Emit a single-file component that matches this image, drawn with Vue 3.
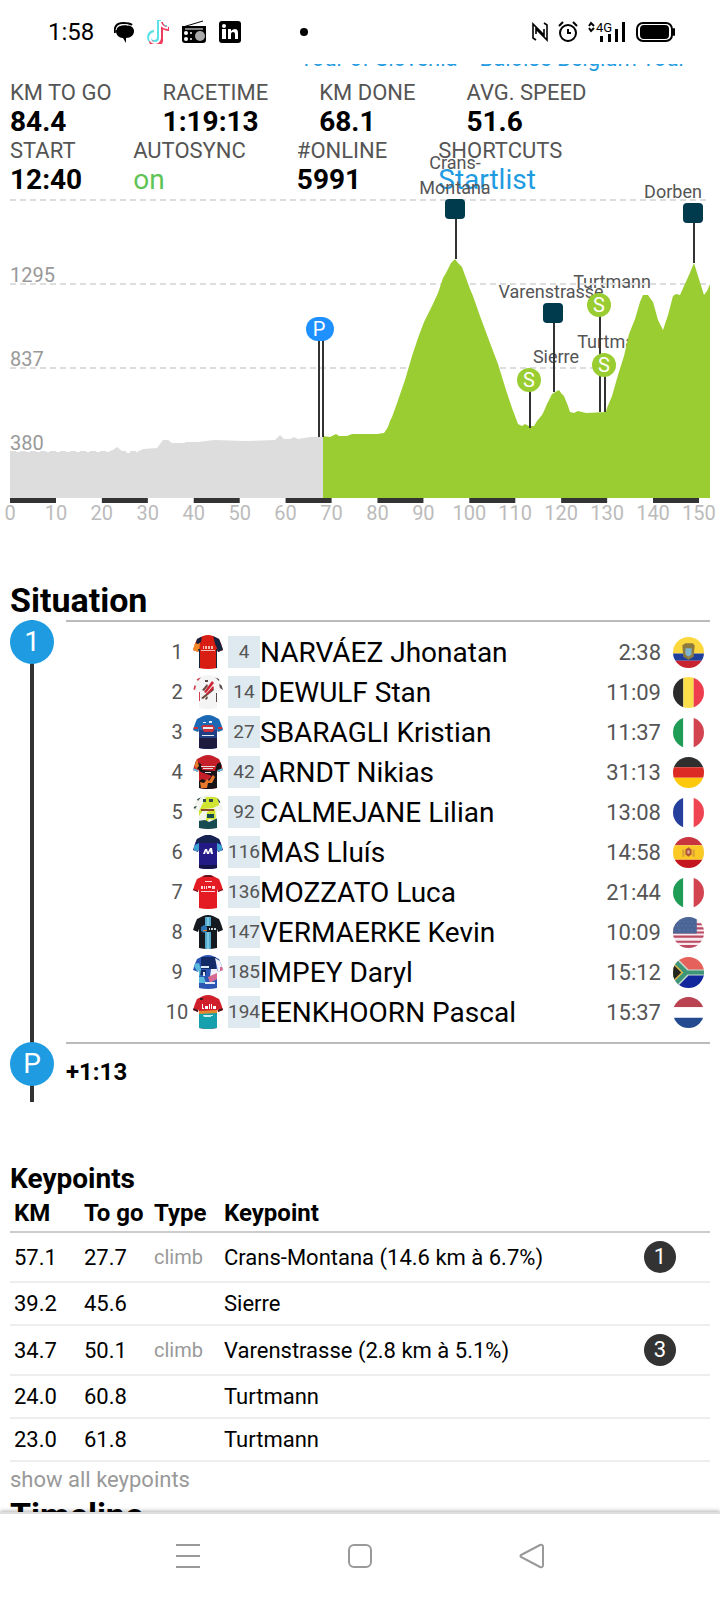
<script setup>
const races = ["Tour of Slovenia", "Baloise Belgium Tour"];

const stats = [
  [
    { label: "KM TO GO", value: "84.4" },
    { label: "RACETIME", value: "1:19:13" },
    { label: "KM DONE", value: "68.1" },
    { label: "AVG. SPEED", value: "51.6" },
  ],
  [
    { label: "START", value: "12:40" },
    { label: "AUTOSYNC", value: "on", type: "on" },
    { label: "#ONLINE", value: "5991" },
    { label: "SHORTCUTS", value: "Startlist", type: "link" },
  ],
];

const KM = 4.593;
const ticks = Array.from({ length: 16 }, (_, i) => ({ km: i * 10, x: i * 10 * KM }));
const grid = [
  { y: 5 },
  { y: 89, label: "1295" },
  { y: 173, label: "837" },
  { y: 257, label: "380" },
];

const donePath =
  "M0 303V257H20L70 257 85 257 98 257 103 255 107 252 112 256 118 258 125 258 133 254 147 253 150 249 153 245 158 245 162 248 174 248 176 247 188 247 204 245 235 246 265 245 270 240 274 244 280 244 284 242 288 244 300 242 313 242V303Z";
const todoPath =
  "M313 303V241L320 242 326 239 329 241 337 241 342 239 367 239 374 238 378 232 380 226 382 222 386 211 395 185 402 161 408 143 414 127 422 111 428 98 433 83 436 78 441 68 445 64 448 68 452 72 460 94 463 101 470 121 480 148 488 169 496 195 502 213 508 229 512 231 515 229 519 231 524 231 527 226 532 220 534 216 537 209 542 199 547 196 549 195 551 198 554 201 558 211 560 217 564 218 568 216 576 218 596 217 597 213 602 201 608 180 614 161 619 139 625 124 630 107 633 100 638 100 640 103 643 107 648 125 653 135 658 120 663 101 666 99 670 100 674 91 679 80 684 68 688 81 694 100 697 96 700 89V303Z";

const markers = [
  { kind: "climb", x: 445, y: 14, base: 64, lines: ["Crans-", "Montana"], lx: 445, ly: -26 },
  { kind: "climb", x: 543, y: 118, base: 197, lines: ["Varenstrasse"], lx: 541, ly: 103 },
  { kind: "climb", x: 683, y: 18, base: 68, lines: ["Dorben"], lx: 663, ly: 3 },
  { kind: "sprint", x: 519, y: 185, base: 233, lines: ["Sierre"], lx: 546, ly: 168 },
  { kind: "sprint", x: 589, y: 110, base: 217, lines: ["Turtmann"], lx: 602, ly: 93 },
  { kind: "sprint", x: 594, y: 170, base: 217, lines: ["Turtmann"], lx: 606, ly: 153 },
];

const riders = [
  { bib: 4, name: "NARVÁEZ Jhonatan", time: "2:38", flag: "ec" },
  { bib: 14, name: "DEWULF Stan", time: "11:09", flag: "be" },
  { bib: 27, name: "SBARAGLI Kristian", time: "11:37", flag: "it" },
  { bib: 42, name: "ARNDT Nikias", time: "31:13", flag: "de" },
  { bib: 92, name: "CALMEJANE Lilian", time: "13:08", flag: "fr" },
  { bib: 116, name: "MAS Lluís", time: "14:58", flag: "es" },
  { bib: 136, name: "MOZZATO Luca", time: "21:44", flag: "it" },
  { bib: 147, name: "VERMAERKE Kevin", time: "10:09", flag: "us" },
  { bib: 185, name: "IMPEY Daryl", time: "15:12", flag: "za" },
  { bib: 194, name: "EENKHOORN Pascal", time: "15:37", flag: "nl" },
];

// one entry per team: [fill, path] layers, drawn bottom to top
const jerseys = [
  [
    ["#d81e13", "M0 0H30V34H0Z"],
    ["#14233f", "M20 0H30V18H25L24 13 22 9Z"],
    ["#f08a24", "M0 9L7 8 6 17H0Z"],
    ["#14233f", "M4 3L9 1 8 7 5 9 3 8ZM5 14H7V34H5ZM23 14H25V34H23Z"],
    ["#f3b9b0", "M10 11h1v3h-1zM12 11h2v3h-2zM15 11h2v3h-2zM18 11h2v3h-2zM8 15h14v1H8z"],
  ],
  [
    ["#f4f4f4", "M0 0H30V34H0Z"],
    ["#d04050", "M3 4L8 2 5 6ZM1 10L3 11 2 15 0 14ZM6 17H7V26H6Z"],
    ["#5a4a48", "M22 2L27 4 26 6ZM26 9L30 11V15L27 13ZM23 18H24V27H23ZM12 5h3v2h-3z"],
    ["#6b4a40", "M9 15L14 9 15 11 11 16ZM8 23L20 13 21 15 10 24ZM12 24L14 21 15 23 13 25Z"],
    ["#cf2233", "M11 17L19 6 21 8 13 18ZM13 19L20 11 21 13 14 20Z"],
  ],
  [
    ["#1c68b5", "M0 0H30V34H0Z"],
    ["#1e3f86", "M5 15H25V24H5Z"],
    ["#1d1c3f", "M5 23H25V34H5Z"],
    ["#c9303a", "M0 12H5V14H0ZM25 12H30V14H25ZM8 11L11 10H20L22 13 20 17H11Z"],
    ["#e8eef6", "M10 7H13V8H10ZM16 6H19V8H16ZM10 12H20V14H10ZM9 20H21V21H9Z"],
  ],
  [
    ["#c5202a", "M0 0H30V34H0Z"],
    ["#191418", "M0 5L8 9 9 15 22 16 24 9 30 6 26 20 24 18 25 34H5V27L9 24 14 26 19 21 8 17 3 12Z"],
    ["#e8792a", "M0 5L4 4 6 11 3 14ZM8 33L7 27 11 28 14 24 16 26 20 20 22 22 19 28 15 28 14 33Z"],
    ["#5ec5e6", "M0 13L5 15V18H0ZM30 13L25 15V18H30Z"],
    ["#e9dcdc", "M8 11H22V12H8ZM10 13H20V14H10ZM12 17H18V18H12Z"],
  ],
  [
    ["#f2f4ee", "M0 0H30V34H0Z"],
    ["#cfe532", "M13 2H25L26 10 20 13 11 14 6 21 6 27 13 25 14 17 22 14 23 25 16 24 12 30H6L5 18Z"],
    ["#174b52", "M5 26L12 25 16 27 25 23V34H5ZM14 19H21V23H14Z"],
    ["#33484a", "M4 4L8 2 5 6ZM24 3L28 7 26 8ZM0 12L4 11 2 14ZM10 4h3v3h-3zM16 4h4v3h-4z"],
    ["#8c4a28", "M8 14H21V16H8Z"],
  ],
  [
    ["#231a86", "M0 0H30V34H0Z"],
    ["#16224f", "M0 0H30V8H0Z"],
    ["#3aa0cf", "M0 11L6 8 6 15 2 18ZM30 11L24 8V15L28 18Z"],
    ["#151449", "M5 30H25V34H5Z"],
    ["#ffffff", "M10 19L12 14H14L15 17 17 13H19L20 19H18L17 16 16 19H14L13 16 12 19Z"],
  ],
  [
    ["#e41b23", "M0 0H30V34H0Z"],
    ["#5b1420", "M0 14L5 16 6 18H0ZM30 14L25 16 24 18H30ZM10 0H20V2H10Z"],
    ["#ffd5d5", "M8 11h2v3H8zM11 11h1v3h-1zM13 11h1v3h-1zM15 11h3v2h-3zM19 11h3v3h-3zM8 16H22V17H8ZM12 6H19V7H12Z"],
  ],
  [
    ["#141a20", "M0 0H30V34H0Z"],
    ["#54a9cf", "M12 2H14V34H12ZM16 2H18V34H16Z"],
    ["#7cc6e0", "M14 2H16V34H14Z"],
    ["#141a20", "M8 11H24V17H8Z"],
    ["#2d78b8", "M8 12L11 10 14 12 14 16 11 18 8 16Z"],
    ["#e87f2a", "M10 15H14V16H10Z"],
    ["#cfd8de", "M16 13h1v2h-1zM18 13h2v2h-2zM21 13h2v2h-2z"],
  ],
  [
    ["#2c56b3", "M0 0H30V34H0Z"],
    ["#142a66", "M8 2H23V14H8ZM6 15H13V20H6Z"],
    ["#f0eef7", "M22 3L30 8V18H25L24 12ZM18 14H24V22H17Z"],
    ["#58b9dc", "M0 9L6 8 8 14 7 22 5 18ZM6 22H11L13 28H6Z"],
    ["#d66a92", "M15 22L24 18V24L17 28ZM27 12H30V17H27Z"],
    ["#dfe8f7", "M8 11H16V13H8ZM10 17H12V21H10ZM12 27H22V29H12Z"],
  ],
  [
    ["#d0202c", "M0 0H30V34H0Z"],
    ["#14a0ad", "M5 17H25V34H5Z"],
    ["#e58a2c", "M6 16L24 15V18L6 19Z"],
    ["#431a20", "M0 13L5 15V17H0ZM30 13L25 15V17H30ZM7 3H10V5H7Z"],
    ["#ffffff", "M9 9h1v4h1v1H9zM12 11h3v3h-3zM16 9h1v5h-1zM18 9h1v5h-1zM20 11h3v3h-3z"],
    ["#c7ecec", "M10 20H20V21H18V22H11Z"],
  ],
];

const flags = {
  ec: [
    ["#fbd83d", "M0 0H30V16H0Z"],
    ["#1f3f9c", "M0 16H30V23H0Z"],
    ["#c8232f", "M0 23H30V30H0Z"],
    ["#8d7a3f", "M9 8L12 6H19L21 8 20 19 15 22 10 19Z"],
    ["#7fb4cc", "M12 11H18V17L15 19 12 17Z"],
  ],
  be: [
    ["#2b2b2b", "M0 0H10V30H0Z"],
    ["#fbdf4a", "M10 0H20V30H10Z"],
    ["#ee3e4e", "M20 0H30V30H20Z"],
  ],
  it: [
    ["#1f9d57", "M0 0H10V30H0Z"],
    ["#fff", "M10 0H20V30H10Z"],
    ["#d24450", "M20 0H30V30H20Z"],
  ],
  de: [
    ["#2f2f2f", "M0 0H30V10H0Z"],
    ["#dc2a25", "M0 10H30V20H0Z"],
    ["#fdc90c", "M0 20H30V30H0Z"],
  ],
  fr: [
    ["#243f9c", "M0 0H10V30H0Z"],
    ["#fff", "M10 0H20V30H10Z"],
    ["#f04452", "M20 0H30V30H20Z"],
  ],
  es: [
    ["#c8353f", "M0 0H30V8H0Z"],
    ["#fbc926", "M0 8H30V22H0Z"],
    ["#c4161f", "M0 22H30V30H0Z"],
    ["#d9a03a", "M9 12H11V19H9ZM19 12H21V19H19Z"],
    ["#b1573a", "M12 12L15 10 18 12V17L15 19 12 17Z"],
    ["#e2b8a0", "M14 13H16V16H14Z"],
  ],
  us: [
    ["#f7e9ee", "M0 0H30V30H0Z"],
    ["#bb4a63", "M0 6H30V8H0ZM0 10H30V12H0ZM0 14H30V16H0ZM0 18H30V20H0ZM0 23H30V25H0ZM0 27H30V30H0Z"],
    ["#4a6596", "M0 0H23V16H0Z"],
    ["#6b82ac", "M6 4h1v1H6zM10 4h1v1h-1zM14 4h1v1h-1zM18 4h1v1h-1zM4 8h1v1H4zM8 8h1v1H8zM12 8h1v1h-1zM16 8h1v1h-1zM20 8h1v1h-1zM6 12h1v1H6zM10 12h1v1h-1zM14 12h1v1h-1zM18 12h1v1h-1z"],
  ],
  za: [
    ["#e5615b", "M0 0H30V13H0Z"],
    ["#12279c", "M0 17H30V30H0Z"],
    ["#c9dcd2", "M0 1H4L15 12H30V18H15L4 29H0Z"],
    ["#3d9677", "M0 2H3L14 13H30V17H14L3 28H0Z"],
    ["#e3b94c", "M0 5L10 15 0 25Z"],
    ["#23261f", "M0 7L8 15 0 23Z"],
  ],
  nl: [
    ["#b94350", "M0 0H30V10H0Z"],
    ["#fff", "M0 10H30V20H0Z"],
    ["#244b8f", "M0 20H30V30H0Z"],
  ],
};

const keypoints = [
  { km: "57.1", togo: "27.7", type: "climb", name: "Crans-Montana (14.6 km à 6.7%)", cat: 1 },
  { km: "39.2", togo: "45.6", name: "Sierre" },
  { km: "34.7", togo: "50.1", type: "climb", name: "Varenstrasse (2.8 km à 5.1%)", cat: 3 },
  { km: "24.0", togo: "60.8", name: "Turtmann" },
  { km: "23.0", togo: "61.8", name: "Turtmann" },
];
</script>

<template>
  <div class="app">
    <header class="status">
      <span class="status__time">1:58</span>
      <div class="status__apps">
        <svg width="20" height="22" viewBox="0 0 20 22">
          <path d="M10 4C5 4 2 6 2 10c0 4 3 7 7 7l3 5v-5c5 0 8-3 8-7s-4-6-10-6Z" />
          <path d="M1 12C0 5 3 2 9 2c4 0 7 0 9 2" fill="none" stroke="#000" stroke-width="2" />
          <path d="M2 9c1-4 5-6 12-5" fill="none" stroke="#fff" />
        </svg>
        <svg width="24" height="24" viewBox="0 0 24 24" fill="none" stroke-width="4">
          <path d="M13 0v17a5 5 0 1 1-5-5M13 1c1 4 4 6 8 6" stroke="#5ce1e6" />
          <path d="M15 2v17a5 5 0 0 1-10 2M15 3c1 4 4 6 8 6" stroke="#ee3c5c" />
          <path d="M14 1v17a5 5 0 1 1-5-5M14 2c1 4 4 6 8 6" stroke="#fff" stroke-width="2" />
        </svg>
        <svg width="24" height="24" viewBox="0 0 24 24">
          <path d="M1 7L21 1" stroke="#000" />
          <path d="M0 6H24V20q0 3-3 3H3q-3 0-3-3Z" />
          <path d="M3 9H21" stroke="#fff" />
          <circle cx="18" cy="16" r="5" fill="#aaa" />
          <g fill="#fff"><circle cx="4" cy="13" r="2" /><circle cx="4" cy="19" r="2" /><circle cx="9" cy="13" r="1" /><circle cx="9" cy="19" r="1" /></g>
        </svg>
        <svg width="24" height="24" viewBox="0 0 24 24">
          <rect x="1" y="1" width="22" height="22" rx="3" />
          <g fill="#fff"><circle cx="6" cy="6" r="2" /><path d="M4 9H8V19H4ZM10 9H13V11Q15 9 17 9 20 9 20 13V19H17V14Q17 12 15 12 13 12 13 14V19H10Z" /></g>
        </svg>
      </div>
      <span class="status__dot"></span>
      <div class="status__system">
        <svg width="16" height="20" viewBox="0 0 16 20" fill="none" stroke="#000" stroke-width="1.6">
          <path d="M4 18L1 16V2L12 13V7M12 1L15 3V18L4 7V12" />
        </svg>
        <svg width="20" height="22" viewBox="0 0 20 22" fill="none" stroke="#000" stroke-width="2">
          <circle cx="10" cy="12" r="8" /><path d="M10 8V12H13M1 5L5 1M19 5L15 1" />
        </svg>
        <svg width="38" height="22" viewBox="0 0 38 22">
          <path d="M1 5L3 2 6 5M1 7L3 10 6 7" fill="none" stroke="#000" stroke-width="2" />
          <text x="8" y="11" font-size="13">4G</text>
          <path d="M12 15h3v6h-3zM20 13h3v8h-3zM27 8h3v13h-3zM34 1h3v20h-3z" />
        </svg>
        <svg width="40" height="22" viewBox="0 0 40 22">
          <rect x="1" y="2" width="35" height="18" rx="6" fill="none" stroke="#000" stroke-width="2" />
          <rect x="4" y="4" width="29" height="14" rx="4" /><rect x="37" y="7" width="2" height="8" rx="1" />
        </svg>
      </div>
    </header>

    <main class="live">
      <nav class="races">
        <a v-for="race in races" :key="race" href="#">{{ race }}</a>
      </nav>

      <dl v-for="(row, i) in stats" :key="i" class="stats">
        <div v-for="stat in row" :key="stat.label">
          <dt>{{ stat.label }}</dt>
          <dd :class="stat.type && `stats__${stat.type}`">
            <a v-if="stat.type === 'link'" href="#">{{ stat.value }}</a>
            <template v-else>{{ stat.value }}</template>
          </dd>
        </div>
      </dl>

      <svg class="profile" viewBox="0 0 700 326">
        <g class="profile__names">
          <template v-for="(m, i) in markers" :key="i">
            <text v-for="(line, n) in m.lines" :key="n" :x="m.lx" :y="m.ly + n * 25">{{ line }}</text>
          </template>
        </g>
        <path v-for="g in grid" :key="g.y" class="profile__grid" :d="`M0 ${g.y}H700`" />
        <path :d="donePath" fill="#ddd" />
        <path :d="todoPath" fill="#9acd32" />
        <g v-for="g in grid" :key="g.y" class="profile__heights">
          <text x="0" :y="g.y - 2">{{ g.label }}</text>
        </g>
        <g v-for="(m, i) in markers" :key="i">
          <path class="profile__stem" :d="`M${m.x + 1} ${m.y + 5}V${m.base}`" />
        </g>
        <g v-for="(m, i) in markers" :key="i">
          <rect v-if="m.kind === 'climb'" :x="m.x - 10" :y="m.y - 10" width="20" height="20" rx="4" fill="#003a4d" />
          <template v-else>
            <circle :cx="m.x" :cy="m.y" r="12" fill="#9acd32" />
            <text class="profile__letter" :x="m.x" :y="m.y + 7">S</text>
          </template>
        </g>
        <path class="profile__stem" d="M309 140V242M313 140V242" />
        <rect x="296" y="122" width="28" height="24" rx="12" fill="#1e90ff" />
        <text class="profile__letter" x="309" y="141">P</text>
        <template v-for="(t, i) in ticks" :key="t.km">
          <rect v-if="i % 2 === 0 && t.km < 150" :x="t.x" y="303" width="46" height="5" fill="#333" />
          <text class="profile__km" :x="t.x" y="325">{{ t.km }}</text>
        </template>
      </svg>

      <section class="situation">
        <h2 class="title">Situation</h2>
        <div class="group">
          <div class="group__rail"><span class="group__badge">1</span></div>
          <ol class="group__body riders">
            <li v-for="(r, i) in riders" :key="r.bib" class="rider">
              <span class="rider__rank">{{ i + 1 }}</span>
              <svg class="rider__jersey" viewBox="0 0 30 34">
                <defs>
                  <clipPath :id="`jersey-${i}`">
                    <path d="M10 1Q15 -1 20 1L26 4Q28 8 30 15L25 17 24 14V33Q15 35 6 33V14L5 17 0 15Q2 8 4 4Z" />
                  </clipPath>
                </defs>
                <g :clip-path="`url(#jersey-${i})`">
                  <path v-for="([fill, d], n) in jerseys[i]" :key="n" :fill="fill" :d="d" />
                </g>
              </svg>
              <span class="rider__bib">{{ r.bib }}</span>
              <span class="rider__name">{{ r.name }}</span>
              <span class="rider__time">{{ r.time }}</span>
              <svg class="rider__flag" viewBox="0 0 30 30">
                <path v-for="([fill, d], n) in flags[r.flag]" :key="n" :fill="fill" :d="d" />
              </svg>
            </li>
          </ol>
        </div>
        <div class="group group_last">
          <div class="group__rail"><span class="group__badge">P</span></div>
          <div class="group__body group__gap">+1:13</div>
        </div>
      </section>

      <section class="keypoints">
        <h3>Keypoints</h3>
        <table>
          <thead>
            <tr><th>KM</th><th>To go</th><th>Type</th><th class="keypoints__name">Keypoint</th><th></th></tr>
          </thead>
          <tbody>
            <tr v-for="k in keypoints" :key="k.km" :class="{ keypoints__climb: k.cat }">
              <td>{{ k.km }}</td>
              <td>{{ k.togo }}</td>
              <td class="keypoints__type">{{ k.type }}</td>
              <td>{{ k.name }}</td>
              <td><span v-if="k.cat" class="keypoints__cat">{{ k.cat }}</span></td>
            </tr>
          </tbody>
        </table>
        <a class="keypoints__more" href="#">show all keypoints</a>
      </section>

      <h2 class="title">Timeline</h2>
    </main>

    <footer class="navbar">
      <button type="button" aria-label="Recent apps">
        <svg width="26" height="26" viewBox="0 0 26 26"><path d="M1 2H25M1 13H25M1 24H25" /></svg>
      </button>
      <button type="button" aria-label="Home">
        <svg width="26" height="26" viewBox="0 0 26 26"><rect x="2" y="2" width="22" height="22" rx="5" /></svg>
      </button>
      <button type="button" aria-label="Back">
        <svg width="26" height="26" viewBox="0 0 26 26"><path d="M2 12L21 2Q24 1 24 4V22Q24 25 21 24L2 14Q1 13 2 12Z" /></svg>
      </button>
    </footer>
  </div>
</template>

<style>
body {
  margin: 0;
  background: #fff;
}
</style>

<style scoped>
.app {
  display: flex;
  flex-direction: column;
  height: 100vh;
  font-family: Roboto, "Liberation Sans", sans-serif;
  font-size: 22px;
  color: #000;
}

a {
  color: #1e9be1;
  text-decoration: none;
}

.status {
  flex: none;
  box-sizing: border-box;
  height: 64px;
  padding: 0 44px 0 48px;
  display: flex;
  align-items: center;
}
.status__time {
  font-size: 24px;
}
.status__apps {
  margin-left: 20px;
  display: flex;
  align-items: center;
  gap: 12px;
}
.status__dot {
  width: 8px;
  height: 8px;
  margin-left: 58px;
  border-radius: 50%;
  background: #000;
}
.status__system {
  margin-left: auto;
  display: flex;
  align-items: center;
  gap: 10px;
}

.live {
  flex: 1;
  min-height: 0;
  overflow: hidden;
  padding: 0 10px;
}

.races {
  margin-top: -19px;
  padding-right: 24px;
  display: flex;
  justify-content: flex-end;
  gap: 22px;
  line-height: 28px;
}

.stats {
  margin: 0;
  display: flex;
  gap: 51px;
}
.races + .stats {
  margin-top: 6px;
}
.stats dt {
  line-height: 28px;
  color: #555;
}
.stats dd {
  margin: 0;
  font-size: 28px;
  font-weight: bold;
  line-height: 30px;
}
.stats .stats__on,
.stats .stats__link {
  font-weight: normal;
}
.stats__on {
  color: #5fc455;
}

.profile {
  display: block;
  width: 100%;
  overflow: visible;
  font-size: 20px;
}
.profile__names {
  fill: #555;
  font-size: 18px;
  text-anchor: middle;
}
.profile__grid {
  stroke: #ddd;
  stroke-width: 2;
  stroke-dasharray: 6 4;
}
.profile__heights {
  fill: #999;
}
.profile__stem {
  stroke: #333;
  stroke-width: 2;
}
.profile__letter {
  fill: #fff;
  text-anchor: middle;
}
.profile__km {
  fill: #bbb;
  text-anchor: middle;
}

.title {
  margin: 0;
  font-size: 34px;
  line-height: 34px;
}

.situation {
  margin-top: 62px;
}
.situation .title {
  margin-bottom: 3px;
}
.group {
  display: grid;
  grid-template-columns: 44px 1fr;
  column-gap: 12px;
}
.group_last {
  min-height: 60px;
}
.group__rail {
  background: linear-gradient(#333, #333) center / 4px 100% no-repeat;
}
.group__badge {
  display: block;
  border-radius: 50%;
  background: #1e9be1;
  color: #fff;
  font-size: 28px;
  line-height: 44px;
  text-align: center;
}
.group__body {
  border-top: 2px solid #bbb;
}
.group__gap {
  padding-top: 12px;
  font-size: 24px;
  font-weight: bold;
  line-height: 32px;
}
.riders {
  margin: 0;
  padding: 10px 6px 10px 95px;
  list-style: none;
}
.rider {
  display: flex;
  align-items: center;
  height: 40px;
  color: #555;
}
.rider__rank {
  width: 32px;
  font-size: 20px;
  text-align: center;
}
.rider__jersey {
  width: 30px;
  height: 34px;
}
.rider__bib {
  width: 32px;
  margin-left: 5px;
  background: #dfe9f0;
  font-size: 19px;
  line-height: 32px;
  text-align: center;
}
.rider__name {
  flex: 1;
  font-size: 28px;
  color: #000;
}
.rider__flag {
  width: 31px;
  height: 31px;
  margin-left: 12px;
  border-radius: 50%;
}

.keypoints {
  margin-top: 60px;
}
.keypoints h3 {
  margin: 0;
  font-size: 28px;
  line-height: 34px;
}
.keypoints table {
  width: 100%;
  table-layout: fixed;
  border-spacing: 0;
}
.keypoints th,
.keypoints td {
  box-sizing: border-box;
  height: 43px;
  padding: 0 0 0 4px;
  border-bottom: 2px solid #eee;
  text-align: left;
  white-space: nowrap;
}
.keypoints th {
  height: 37px;
  padding-bottom: 2px;
  border-color: #ccc;
  font-size: 24px;
}
.keypoints .keypoints__name {
  width: 60%;
}
.keypoints__climb td {
  height: 50px;
}
.keypoints .keypoints__type {
  color: #999;
  font-size: 20px;
}
.keypoints__cat {
  display: block;
  width: 32px;
  border-radius: 50%;
  background: #333;
  color: #fff;
  line-height: 32px;
  text-align: center;
}
.keypoints__more {
  display: block;
  color: #999;
  line-height: 36px;
}

.navbar {
  position: relative;
  flex: none;
  box-sizing: border-box;
  height: 88px;
  padding: 0 102px 2px;
  border-top: 2px solid #ddd;
  background: #fff;
  box-shadow: 0 -1px 4px rgba(0, 0, 0, 0.3);
  display: flex;
  justify-content: space-around;
  align-items: center;
}
.navbar button {
  padding: 0;
  border: none;
  background: none;
}
.navbar svg {
  display: block;
  fill: none;
  stroke: #999;
  stroke-width: 2;
}
</style>
